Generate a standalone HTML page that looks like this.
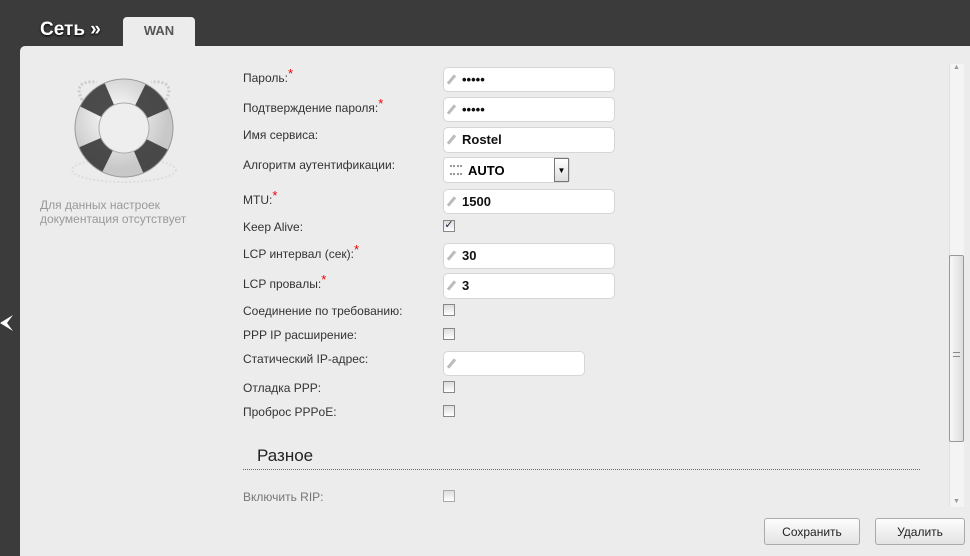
<!DOCTYPE html>
<html><head><meta charset="utf-8"><style>
*{margin:0;padding:0;box-sizing:border-box}
body{width:970px;height:550px;overflow:hidden;background:#3b3b3b;font-family:"Liberation Sans",Arial,sans-serif;position:relative}
.a{position:absolute}
.title{left:40px;top:19px;color:#fff;font-weight:bold;font-size:19px;text-shadow:0 1px 2px #000}
.tab{left:123px;top:17px;width:72px;height:32px;background:#ececec;border-radius:4px 4px 0 0;font-weight:bold;font-size:13px;color:#555;text-align:center;padding-top:6px}
.panel{left:20px;top:46px;width:960px;height:510px;background:#ececec;border-radius:5px 0 0 0}
.lbl{font-size:12px;color:#333;left:243px}
.lbl i{color:#e00;font-style:normal;font-size:13px;position:relative;top:-4px}
.inp{left:443px;width:172px;height:25px;background:#fff;border:1px solid #d6d6d6;border-radius:5px;font-size:13px;font-weight:bold;color:#111;padding:4px 0 0 18px}
.inp:before{content:"";position:absolute;left:6px;top:6px;width:3px;height:11px;background:#bbb;transform:rotate(40deg)}
.cb{left:443px;width:12px;height:12px;border:1px solid #888;background:linear-gradient(#ddd,#fff)}
.btn{top:518px;height:27px;border:1px solid #aaa;border-radius:3px;background:linear-gradient(#fdfdfd,#e4e4e4);font-size:12px;color:#222;text-align:center;padding-top:6px}
</style></head><body>
<div class="a title">Сеть »</div>
<div class="a tab">WAN</div>
<div class="a panel"></div>

<svg class="a" style="left:62px;top:70px" width="124" height="115" viewBox="0 0 124 115">
<defs><radialGradient id="g" cx="0.4" cy="0.35" r="0.7"><stop offset="0" stop-color="#fff"/><stop offset="1" stop-color="#c8c8c8"/></radialGradient></defs>
<ellipse cx="62" cy="100" rx="52" ry="12" fill="none" stroke="#ddd" stroke-width="2" stroke-dasharray="2 2"/>
<path d="M20 30 Q10 10 35 12 M104 30 Q114 10 89 12" fill="none" stroke="#ccc" stroke-width="3" stroke-dasharray="2 2"/>
<circle cx="62" cy="58" r="37" fill="none" stroke="url(#g)" stroke-width="24"/>
<circle cx="62" cy="58" r="37" fill="none" stroke="#3a3a3a" stroke-width="24" stroke-dasharray="26 32" stroke-dashoffset="-17" opacity="0.9"/>
<circle cx="62" cy="58" r="49" fill="none" stroke="#999" stroke-width="1"/>
<circle cx="62" cy="58" r="25" fill="#eee" stroke="#aaa" stroke-width="1"/>
</svg>
<div class="a" style="left:40px;top:198px;font-size:12px;color:#999;line-height:14px">Для данных настроек<br>документация отсутствует</div>

<div class="a lbl" style="top:70px">Пароль:<i>*</i></div>
<div class="a inp" style="top:67px">•••••</div>
<div class="a lbl" style="top:100px">Подтверждение пароля:<i>*</i></div>
<div class="a inp" style="top:97px">•••••</div>
<div class="a lbl" style="top:128px">Имя сервиса:</div>
<div class="a inp" style="top:127px;height:26px">Rostel</div>
<div class="a lbl" style="top:158px">Алгоритм аутентификации:</div>
<div class="a" style="left:443px;top:157px;width:127px;height:26px;background:#fff;border:1px solid #d6d6d6;border-radius:4px;font-size:13px;font-weight:bold;padding:5px 0 0 24px">AUTO
<span class="a" style="left:6px;top:7px;width:12px;height:10px;border-top:2px dotted #999;border-bottom:2px dotted #999"></span>
<span class="a" style="right:0;top:0;width:15px;height:24px;border:1px solid #777;background:linear-gradient(#fff,#ddd);font-size:8px;text-align:center;padding-top:7px">▼</span></div>
<div class="a lbl" style="top:192px">MTU:<i>*</i></div>
<div class="a inp" style="top:189px">1500</div>
<div class="a lbl" style="top:220px">Keep Alive:</div>
<div class="a cb" style="top:220px;font-size:11px;line-height:9px;color:#224;text-align:center">✓</div>
<div class="a lbl" style="top:246px">LCP интервал (сек):<i>*</i></div>
<div class="a inp" style="top:243px;height:26px">30</div>
<div class="a lbl" style="top:276px">LCP провалы:<i>*</i></div>
<div class="a inp" style="top:273px;height:26px">3</div>
<div class="a lbl" style="top:304px">Соединение по требованию:</div>
<div class="a cb" style="top:304px"></div>
<div class="a lbl" style="top:328px">PPP IP расширение:</div>
<div class="a cb" style="top:328px"></div>
<div class="a lbl" style="top:352px">Статический IP-адрес:</div>
<div class="a inp" style="top:351px;width:142px"></div>
<div class="a lbl" style="top:381px">Отладка PPP:</div>
<div class="a cb" style="top:381px"></div>
<div class="a lbl" style="top:405px">Проброс PPPoE:</div>
<div class="a cb" style="top:405px"></div>
<div class="a" style="left:257px;top:446px;font-size:17px;color:#222">Разное</div>
<div class="a" style="left:243px;top:469px;width:677px;border-top:1px dotted #666"></div>
<div class="a lbl" style="top:490px;color:#777">Включить RIP:</div>
<div class="a cb" style="top:490px;border-color:#aaa"></div>

<div class="a" style="left:949px;top:64px;width:15px;height:443px;background:#f4f4f4;border-left:1px solid #e0e0e0"></div>
<div class="a" style="left:953px;top:64px;font-size:7px;color:#999">▲</div>
<div class="a" style="left:949px;top:255px;width:15px;height:187px;border:1px solid #999;border-radius:2px;background:linear-gradient(90deg,#f8f8f8,#ddd)"></div>
<div class="a" style="left:953px;top:352px;width:7px;border-top:1px solid #888;height:5px;border-bottom:1px solid #888"></div>
<div class="a" style="left:953px;top:498px;font-size:7px;color:#999">▼</div>

<div class="a btn" style="left:764px;width:96px">Сохранить</div>
<div class="a btn" style="left:875px;width:90px">Удалить</div>
<svg class="a" style="left:0;top:314px" width="14" height="18" viewBox="0 0 14 18"><path d="M0 9 L13 1 L7 9 L13 17 Z" fill="#fff"/></svg>
</body></html>
